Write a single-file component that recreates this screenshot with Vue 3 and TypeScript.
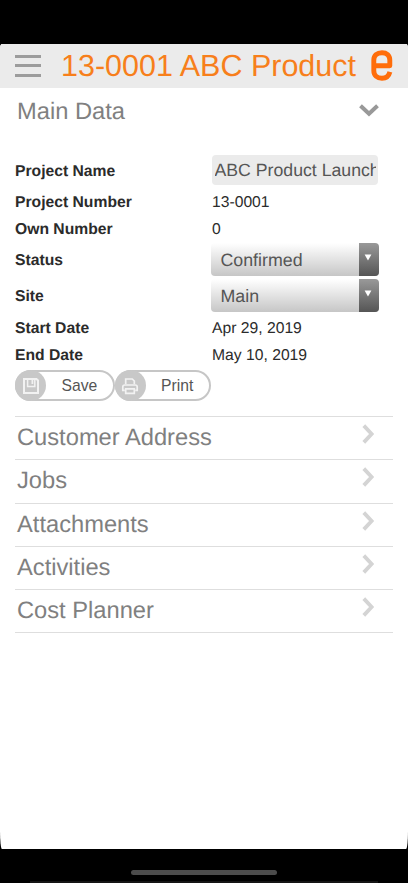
<script setup lang="ts">
import { ref } from 'vue'

interface Field {
  label: string
  value: string
  kind: 'text' | 'input' | 'select'
}

const fields = ref<Field[]>([
  { label: 'Project Name', value: 'ABC Product Launch', kind: 'input' },
  { label: 'Project Number', value: '13-0001', kind: 'text' },
  { label: 'Own Number', value: '0', kind: 'text' },
  { label: 'Status', value: 'Confirmed', kind: 'select' },
  { label: 'Site', value: 'Main', kind: 'select' },
  { label: 'Start Date', value: 'Apr 29, 2019', kind: 'text' },
  { label: 'End Date', value: 'May 10, 2019', kind: 'text' },
])

const sections: string[] = ['Customer Address', 'Jobs', 'Attachments', 'Activities', 'Cost Planner']
</script>

<template>
  <div class="device">
    <div class="screen">
      <header class="bar">
        <button class="menu" aria-label="Menu"><i></i><i></i><i></i></button>
        <h1 class="title">13-0001 ABC Product</h1>
        <svg class="logo" viewBox="0 0 22 31" fill="none" stroke="#ff6d0a" stroke-width="4.9">
          <path d="M2.6 15.8H18.8V10C18.8 5.2 15.6 2.7 11 2.7C6 2.7 2.8 5.6 2.8 10V20.7C2.8 25.3 6 28.2 11 28.2C15 28.2 17.8 26.2 18.9 21.8" stroke-linejoin="round" />
        </svg>
      </header>

      <main class="content">
        <div class="heading">
          <h2>Main Data</h2>
          <svg class="down" viewBox="0 0 20 13" fill="none" stroke="#999" stroke-width="4">
            <path d="M1.5 1.8L10 9.8L18.5 1.8" />
          </svg>
        </div>

        <div class="form">
          <div v-for="f in fields" :key="f.label" class="row" :class="f.kind">
            <span class="label">{{ f.label }}</span>
            <div v-if="f.kind === 'input'" class="field"><span class="clip">{{ f.value }}</span></div>
            <div v-else-if="f.kind === 'select'" class="dropdown">
              <span class="choice">{{ f.value }}</span>
              <span class="arrow">
                <svg viewBox="0 0 8 7"><path d="M.6 .5H7.4L4 6.5Z" fill="#fff" /></svg>
              </span>
            </div>
            <span v-else class="value">{{ f.value }}</span>
          </div>
        </div>

        <div class="actions">
          <button class="pill">
            <span class="disc">
              <svg viewBox="0 0 18 18" fill="none" stroke="#f2f2f2" stroke-width="2">
                <path d="M2 2H14.5L16 3.5V16H2Z" />
                <path d="M5.6 2V9.6H12.8V2" stroke-width="1.5" />
                <path d="M10.4 2.5V7" stroke-width="1.8" />
              </svg>
            </span>
            <span class="caption">Save</span>
          </button>
          <button class="pill print">
            <span class="disc">
              <svg viewBox="0 0 18 18" fill="none" stroke="#f2f2f2" stroke-width="1.7">
                <path d="M4.7 7V2H11.3L13.3 4V7" />
                <path d="M3.8 13.3H1.8V10Q1.8 8 3.8 8H14.2Q16.2 8 16.2 10V13.3H14.2" />
                <path d="M4.7 11.8H13.3V16.3H4.7Z" />
              </svg>
            </span>
            <span class="caption">Print</span>
          </button>
        </div>

        <nav class="sections">
          <a v-for="s in sections" :key="s" class="section">
            <span>{{ s }}</span>
            <svg class="right" viewBox="0 0 13 20" fill="none" stroke="#d4d4d4" stroke-width="3.8">
              <path d="M1.8 1.6L9.6 10L1.8 18.4" />
            </svg>
          </a>
        </nav>
      </main>
    </div>
    <footer class="home"><span class="indicator"></span><span class="edge"></span></footer>
  </div>
</template>

<style>
body {
  background: #000;
}
</style>

<style scoped>
.device {
  box-sizing: border-box;
  width: 408px;
  height: 883px;
  padding-top: 43.5px;
  background: #000;
  display: flex;
  flex-direction: column;
  overflow: hidden;
  font-family: 'Liberation Sans', Arial, sans-serif;
  text-rendering: geometricPrecision;
}
button {
  appearance: none;
  margin: 0;
  padding: 0;
  border: 0;
  background: none;
  font: inherit;
}
.screen {
  height: 805.5px;
  flex: none;
  background: #fff;
  border-radius: 2px 2px 2px 2px / 5px 5px 18px 18px;
  overflow: hidden;
}
.bar {
  height: 44.5px;
  display: flex;
  align-items: center;
  background: #ebebeb;
}
.menu {
  width: 26px;
  margin-left: 14.5px;
  display: flex;
  flex-direction: column;
  gap: 6.5px;
}
.menu i {
  height: 3px;
  background: #9c9c9c;
}
.title {
  width: 300px;
  margin: 0 0 0 20.5px;
  font-size: 30.5px;
  font-weight: 400;
  line-height: 44px;
  white-space: nowrap;
  color: #f77f1b;
}
.logo {
  width: 22px;
  height: 31px;
  margin-left: 10px;
}
.content {
  padding: 0 15px;
}
.heading {
  height: 66px;
  display: flex;
  justify-content: space-between;
  align-items: flex-start;
  padding: 0 14.5px 0 2px;
}
h2 {
  margin: 0;
  font-size: 23.7px;
  line-height: 49px;
  font-weight: 400;
  color: #808080;
}
.down {
  width: 20px;
  height: 13px;
  margin-top: 16px;
}
.row {
  display: flex;
  align-items: center;
  height: 27px;
  font-size: 15.7px;
  color: #2b2b2b;
}
.row.input {
  height: 34px;
}
.row.select {
  height: 36px;
}
.label {
  width: 196px;
  flex: none;
  padding-top: 2px;
  font-weight: 700;
}
.value {
  padding: 2px 0 0 1px;
}
.field {
  box-sizing: border-box;
  width: 166.5px;
  height: 30px;
  margin-top: -2px;
  margin-left: 0.5px;
  padding: 0 2.5px 0 3px;
  border-radius: 4px;
  background: #ebebeb;
}
.clip {
  display: block;
  overflow: hidden;
  white-space: nowrap;
  font-size: 17.7px;
  line-height: 30px;
  color: #555;
}
.dropdown {
  width: 167.5px;
  height: 32.5px;
  margin-top: -1px;
  display: flex;
  justify-content: space-between;
  border-radius: 4px;
  overflow: hidden;
  background: linear-gradient(#fff 0%, #f4f4f4 20%, #c6c6c6 100%);
}
.choice {
  padding-left: 9.5px;
  font-size: 17.8px;
  line-height: 34px;
  color: #555;
}
.arrow {
  width: 19.5px;
  display: flex;
  justify-content: center;
  background: linear-gradient(#999, #555);
}
.arrow svg {
  width: 8px;
  height: 7px;
  margin: 11px 1.5px 0 0;
}
.actions {
  display: flex;
  height: 48px;
  padding-top: 2px;
  box-sizing: border-box;
}
.pill {
  box-sizing: border-box;
  width: 99.5px;
  height: 31px;
  display: flex;
  align-items: center;
  border: 2px solid #c6c6c6;
  border-radius: 16px;
}
.print {
  width: 96.5px;
}
.disc {
  width: 31px;
  height: 31px;
  flex: none;
  margin-left: -2px;
  border-radius: 50%;
  background: #c8c8c8;
  display: flex;
  align-items: center;
  justify-content: center;
}
.disc svg {
  width: 18px;
  height: 18px;
}
.caption {
  flex: 1;
  padding: 1px 0 0 15.5px;
  text-align: left;
  font-size: 15.7px;
  color: #555;
}
.sections {
  border-top: 1px solid #dedede;
}
.section {
  box-sizing: border-box;
  height: 43.25px;
  display: flex;
  align-items: flex-start;
  justify-content: space-between;
  padding: 0 18px 0 2px;
  border-bottom: 1px solid #dedede;
  font-size: 23.7px;
  line-height: 42px;
  color: #808080;
}
.right {
  width: 13px;
  height: 20px;
  margin-top: 7px;
}
.home {
  flex: 1;
  display: flex;
  flex-direction: column;
  align-items: center;
  justify-content: space-between;
  padding-top: 21px;
}
.indicator {
  width: 146px;
  height: 5px;
  border-radius: 3px;
  background: #4c4c4c;
}
.edge {
  width: 348px;
  height: 2px;
  background: #141414;
}
</style>
